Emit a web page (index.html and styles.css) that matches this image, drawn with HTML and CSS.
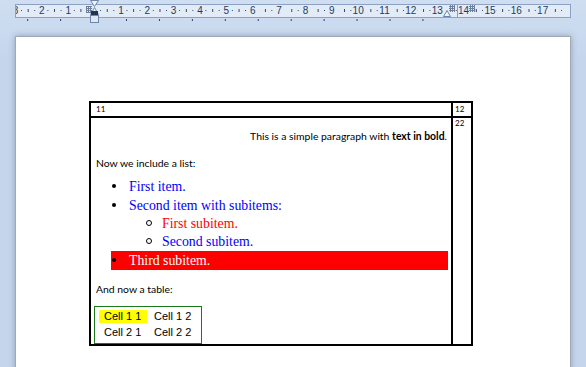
FILE: index.html
```html
<!DOCTYPE html>
<html lang="en">
<head>
    <meta charset="UTF-8">
    <title>Document</title>
    <link rel="stylesheet" href="styles.css">
</head>
<body>
    <!-- Ruler -->
    <div class="ruler-bar">
        <div class="ruler">
            <div class="ruler-nums">
                <span>3</span><span>2</span><span>1</span><span></span>
                <span>1</span><span>2</span><span>3</span><span>4</span><span>5</span>
                <span>6</span><span>7</span><span>8</span><span>9</span><span>10</span>
                <span>11</span><span>12</span><span>13</span><span>14</span><span>15</span>
                <span>16</span><span>17</span>
            </div>
        </div>
        <div class="tab-stops"></div>

        <svg class="ruler-marks" width="586" height="24" viewBox="0 0 586 24">
            <defs>
                <pattern id="hatch" width="2" height="2" patternUnits="userSpaceOnUse">
                    <rect width="2" height="2" fill="#e6ecf5"/>
                    <rect width="1" height="2" fill="#6f7f99"/>
                    <rect width="2" height="1" fill="#6f7f99"/>
                </pattern>
            </defs>
            <!-- table column marker, left -->
            <rect x="86" y="6" width="6" height="7" fill="url(#hatch)"/>
            <!-- left indent markers -->
            <polygon points="90.5,0.5 98.5,0.5 94.5,6.5" fill="#eef3fa" stroke="#6d86ad"/>
            <polygon points="90.5,14.5 98.5,14.5 94.5,7.5" fill="#eef3fa" stroke="#6d86ad"/>
            <rect x="91" y="11" width="7" height="4" fill="#24344d"/>
            <rect x="90.5" y="15.5" width="8" height="7" fill="#dfe7f3" stroke="#6d86ad"/>
            <!-- right indent marker -->
            <polygon points="443.5,16.5 450.5,16.5 447,10.5" fill="#eef3fa" stroke="#6d86ad"/>
            <!-- table column markers, right -->
            <rect x="449" y="5" width="6" height="7" fill="url(#hatch)"/>
            <rect x="457" y="4" width="1" height="14" fill="#8aa0c2"/>
            <rect x="469" y="5" width="6" height="7" fill="url(#hatch)"/>
        </svg>
    </div>

    <!-- Page -->
    <div class="page">
        <div class="doc-table">
            <div class="cell c11">11</div>
            <div class="cell c12">12</div>
            <div class="cell c21">
                <p class="right">This is a simple paragraph with <b>text in bold</b>.</p>
                <p class="gap">Now we include a list:</p>
                <ul class="list">
                    <li class="blue">First item.</li>
                    <li class="blue">Second item with subitems:
                        <ul class="sublist">
                            <li class="red">First subitem.</li>
                            <li class="blue">Second subitem.</li>
                        </ul>
                    </li>
                    <li class="hilite">Third subitem.</li>
                </ul>
                <p class="gap-small">And now a table:</p>
                <div class="mini-table">
                    <span class="yellow">Cell 1 1</span>
                    <span>Cell 1 2</span>
                    <span>Cell 2 1</span>
                    <span>Cell 2 2</span>
                </div>
            </div>
            <div class="cell c22">22</div>
        </div>
    </div>
</body>
</html>
```

FILE: styles.css
```css
body {
    margin: 0;
    height: 367px;
    overflow: hidden;
    background: linear-gradient(#cfdef1, #c5d6ec 60px);
    font-family: Lato, "Liberation Sans", sans-serif;
}

/* Ruler */
.ruler-bar {
    position: relative;
    height: 21px;
    padding: 4px 15px 0;
    box-sizing: border-box;
}

.ruler {
    height: 14px;
    box-sizing: border-box;
    border: 1px solid #8ca2c4;
    background-color: #e3ebf7;
    background-image:
        linear-gradient(to right, #2a4670 1px, transparent 1px),
        linear-gradient(to right, #2a4670 1px, transparent 1px);
    background-size: 13.18px 1px, 26.36px 3px;
    background-position: 5.1px 5px, 11.7px 4px;
    background-repeat: repeat-x, repeat-x;
    overflow: hidden;
}

.ruler-nums {
    display: flex;
    margin-left: -13.7px;
    font-family: "Liberation Sans", Arial, sans-serif;
    font-size: 10px;
    line-height: 11px;
    color: #1e3b64;
}

.ruler-nums span {
    flex: 0 0 26.36px;
    text-align: center;
}

.ruler-nums span:not(:empty) {
    background: linear-gradient(#e3ebf7, #e3ebf7) center / 9px 100% no-repeat;
}

.ruler-nums span:nth-child(n+10) {
    background-size: 13px 100%;
}

.tab-stops {
    width: 420px;
    height: 2px;
    margin-top: 1px;
    background-image: linear-gradient(to right, #23406a 1px, transparent 1px);
    background-size: 32.95px 2px;
    background-position: 12.2px 0;
    background-repeat: repeat-x;
}

.ruler-marks {
    position: absolute;
    left: 0;
    top: 0;
}

/* Page */
.page {
    margin: 15px 0 0 15px;
    width: 556px;
    height: 400px;
    box-sizing: border-box;
    padding: 64px 0 0 73px;
    background: #fff;
    border: 1px solid #a3a9b2;
    box-shadow: 0 0 6px rgba(70, 90, 120, 0.45);
}

.doc-table {
    display: grid;
    grid-template-columns: 360px 20px;
    grid-template-rows: 13px 228px;
    width: 384px;
    box-sizing: border-box;
    border: 2px solid #000;
    color: #000;
}

.cell {
    font-size: 8px;
    line-height: 13px;
}

.c11 {
    padding-left: 5px;
}

.c12 {
    border-left: 2px solid #000;
    padding-left: 2px;
}

.c21 {
    border-top: 2px solid #000;
    padding: 11px 5px 0;
    font-size: 10.4px;
    line-height: 14px;
}

.c22 {
    border-top: 2px solid #000;
    border-left: 2px solid #000;
    padding-left: 2px;
    line-height: 10px;
}

p {
    margin: 0;
}

.right {
    text-align: right;
    margin-right: -1px;
}

.gap {
    margin-top: 13px;
}

.gap-small {
    margin-top: 12px;
}

/* Bullet list */
.list {
    list-style: none;
    margin: 7px -2px 0 15px;
    padding: 0;
    font-family: "Liberation Serif", "Times New Roman", serif;
    font-size: 13.8px;
    line-height: 19px;
}

.list > li::before {
    content: "";
    display: inline-block;
    width: 4px;
    height: 4px;
    margin: 0 13px 0 1px;
    border-radius: 50%;
    background: #000;
    vertical-align: 3px;
}

.sublist {
    list-style: none;
    margin: 0 0 0 33px;
    padding: 0;
    line-height: 18px;
}

.sublist li::before {
    content: "";
    display: inline-block;
    width: 4px;
    height: 4px;
    margin: 0 10px 0 2px;
    border: 1px solid #000;
    border-radius: 50%;
    vertical-align: 2px;
}

.blue {
    color: #0000ff;
}

.red {
    color: #ff0000;
}

.hilite {
    background: #ff0000;
    color: #fff;
}

/* Small table */
.mini-table {
    display: grid;
    grid-template-columns: 48px 48px;
    grid-auto-rows: 13px;
    gap: 3px 2px;
    width: 108px;
    box-sizing: border-box;
    margin: 10px 0 0 -2px;
    padding: 3px 4px 4px;
    border: 1px solid #1a7a1a;
    font-family: "Liberation Sans", Arial, sans-serif;
    font-size: 11px;
    line-height: 13px;
}

.mini-table span {
    padding-left: 5px;
    white-space: pre;
}

.yellow {
    background: #ffff00;
}
```
